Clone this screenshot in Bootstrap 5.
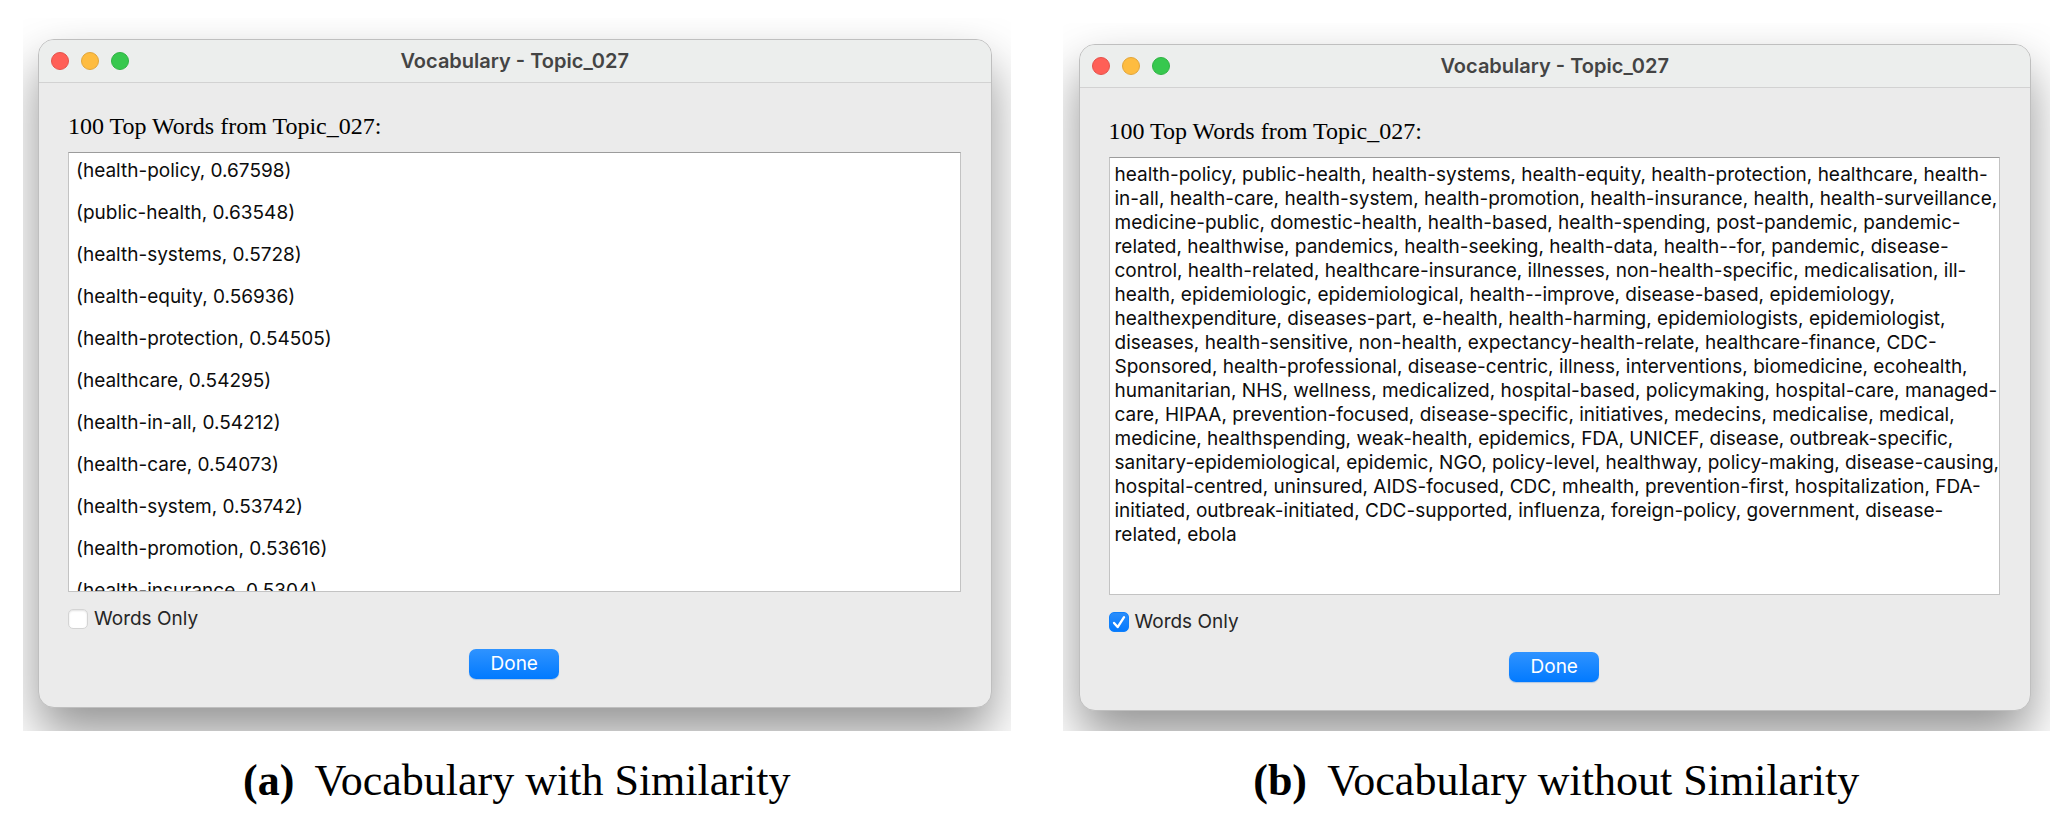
<!DOCTYPE html>
<html lang="en">
<head>
<meta charset="utf-8">
<meta name="viewport" content="width=device-width, initial-scale=1">
<title>Vocabulary - Topic_027</title>
<link rel="stylesheet" href="https://cdn.jsdelivr.net/npm/bootstrap@5.3.0/dist/css/bootstrap.min.css">
<style>
  body { background: #fff; color: #000; font-family: Inter, "Liberation Sans", sans-serif; }
  .figures { padding: 18px 18px 0 23px; gap: 52px; }
  .figures figure { flex: 1 1 0; min-width: 0; }
  .backdrop { padding: 21px 19px 23px 15px; overflow: hidden; }
  .fig-b .backdrop { padding-bottom: 20px; padding-left: 16px; }
  .mac-window {
    background: #ebebeb; border: 1px solid #bfbfbf; border-radius: 16px;
    box-shadow: 0 26px 50px rgba(0, 0, 0, .42);
  }
  .titlebar {
    height: 43px; padding: 0 12px; background: #eceeed;
    border-bottom: 1px solid #d2d2d2; border-radius: 15px 15px 0 0;
    display: grid; grid-template-columns: 1fr auto 1fr;
  }
  .lights { gap: 12px; }
  .light { width: 18px; height: 18px; border-radius: 50%; border: 1px solid; padding: 0; }
  .light-close { background: #ff5f57; border-color: #e5524b; }
  .light-min { background: #febc40; border-color: #e2a63a; }
  .light-zoom { background: #37c84e; border-color: #30b344; }
  .window-title { font-size: 20px; line-height: 24px; font-weight: 600; color: #444; }
  .window-body { padding: 29px 30px 28px 29px; }
  .words-label { font-family: "Liberation Serif", serif; font-size: 24px; line-height: 28px; margin-bottom: 12px; }
  .words-box {
    border: 1px solid #c3c3c3; border-top-color: #9c9c9c; border-radius: 0; background: #fff;
    color: #0c0c0c; font-size: 19px; padding: 7px 0 0 7px; resize: none;
    overflow: hidden; white-space: pre; outline: 0;
  }
  .words-spaced { height: 440px; line-height: 21px; }
  .words-flow { height: 438px; line-height: 24px; padding: 5px 0 0 5px; }
  .only-row { margin-top: 17px; gap: 6px; font-size: 19px; line-height: 20px; color: #262626; }
  .only-row .form-check-input {
    width: 20px; height: 20px; margin: 0; border: 1px solid #d4d4d4; border-radius: 5px;
    background-color: #fff; box-shadow: inset 0 1px 2px rgba(0, 0, 0, .12);
  }
  .only-row .form-check-input:checked {
    border-color: #0f80fb; box-shadow: none;
    background-image: url("data:image/svg+xml,%3Csvg xmlns='http://www.w3.org/2000/svg' viewBox='0 0 20 20'%3E%3Cpath d='M4.5 11l4 4.6L15.6 4.6' fill='none' stroke='%23fff' stroke-width='2.6' stroke-linecap='round' stroke-linejoin='round'/%3E%3C/svg%3E"), linear-gradient(#2a8dfb, #0479fe);
    background-size: 100% 100%;
  }
  .done-btn {
    width: 90px; height: 30px; margin-top: 20px; padding: 0; border: 0; border-radius: 7px;
    background: linear-gradient(#2f93ff, #027aff); color: #fff; font-size: 19px; line-height: 30px;
    box-shadow: 0 1px 1px rgba(0, 90, 200, .25);
  }
  .fig-caption { font-family: "Liberation Serif", serif; font-size: 44px; line-height: 52px; margin: 24px 0 0; }
  .fig-caption b { margin-right: 10px; }
</style>
</head>
<body>
<main class="figures d-flex align-items-end">

  <figure class="fig-a m-0">
    <div class="backdrop">
      <section class="mac-window" aria-label="Vocabulary with similarity">
        <header class="titlebar align-items-center">
          <div class="d-flex lights">
            <button type="button" class="light light-close" aria-label="Close"></button>
            <button type="button" class="light light-min" aria-label="Minimize"></button>
            <button type="button" class="light light-zoom" aria-label="Zoom"></button>
          </div>
          <div class="window-title">Vocabulary - Topic_027</div>
        </header>
        <div class="window-body">
          <label class="words-label d-block" for="words-a">100 Top Words from Topic_027:</label>
          <textarea id="words-a" class="words-box words-spaced d-block w-100" readonly spellcheck="false">
(health-policy, 0.67598)

(public-health, 0.63548)

(health-systems, 0.5728)

(health-equity, 0.56936)

(health-protection, 0.54505)

(healthcare, 0.54295)

(health-in-all, 0.54212)

(health-care, 0.54073)

(health-system, 0.53742)

(health-promotion, 0.53616)

(health-insurance, 0.5304)</textarea>
          <div class="only-row d-flex align-items-center">
            <input class="form-check-input" type="checkbox" id="only-a">
            <label for="only-a">Words Only</label>
          </div>
          <div class="text-center"><button type="button" class="done-btn">Done</button></div>
        </div>
      </section>
    </div>
    <figcaption class="fig-caption text-center"><b>(a)</b> Vocabulary with Similarity</figcaption>
  </figure>

  <figure class="fig-b m-0">
    <div class="backdrop">
      <section class="mac-window" aria-label="Vocabulary without similarity">
        <header class="titlebar align-items-center">
          <div class="d-flex lights">
            <button type="button" class="light light-close" aria-label="Close"></button>
            <button type="button" class="light light-min" aria-label="Minimize"></button>
            <button type="button" class="light light-zoom" aria-label="Zoom"></button>
          </div>
          <div class="window-title">Vocabulary - Topic_027</div>
        </header>
        <div class="window-body">
          <label class="words-label d-block" for="words-b">100 Top Words from Topic_027:</label>
          <textarea id="words-b" class="words-box words-flow d-block w-100" readonly spellcheck="false">
health-policy, public-health, health-systems, health-equity, health-protection, healthcare, health-
in-all, health-care, health-system, health-promotion, health-insurance, health, health-surveillance,
medicine-public, domestic-health, health-based, health-spending, post-pandemic, pandemic-
related, healthwise, pandemics, health-seeking, health-data, health--for, pandemic, disease-
control, health-related, healthcare-insurance, illnesses, non-health-specific, medicalisation, ill-
health, epidemiologic, epidemiological, health--improve, disease-based, epidemiology,
healthexpenditure, diseases-part, e-health, health-harming, epidemiologists, epidemiologist,
diseases, health-sensitive, non-health, expectancy-health-relate, healthcare-finance, CDC-
Sponsored, health-professional, disease-centric, illness, interventions, biomedicine, ecohealth,
humanitarian, NHS, wellness, medicalized, hospital-based, policymaking, hospital-care, managed-
care, HIPAA, prevention-focused, disease-specific, initiatives, medecins, medicalise, medical,
medicine, healthspending, weak-health, epidemics, FDA, UNICEF, disease, outbreak-specific,
sanitary-epidemiological, epidemic, NGO, policy-level, healthway, policy-making, disease-causing,
hospital-centred, uninsured, AIDS-focused, CDC, mhealth, prevention-first, hospitalization, FDA-
initiated, outbreak-initiated, CDC-supported, influenza, foreign-policy, government, disease-
related, ebola</textarea>
          <div class="only-row d-flex align-items-center">
            <input class="form-check-input" type="checkbox" id="only-b" checked>
            <label for="only-b">Words Only</label>
          </div>
          <div class="text-center"><button type="button" class="done-btn">Done</button></div>
        </div>
      </section>
    </div>
    <figcaption class="fig-caption text-center"><b>(b)</b> Vocabulary without Similarity</figcaption>
  </figure>

</main>
<script src="https://cdn.jsdelivr.net/npm/bootstrap@5.3.0/dist/js/bootstrap.bundle.min.js"></script>
</body>
</html>
